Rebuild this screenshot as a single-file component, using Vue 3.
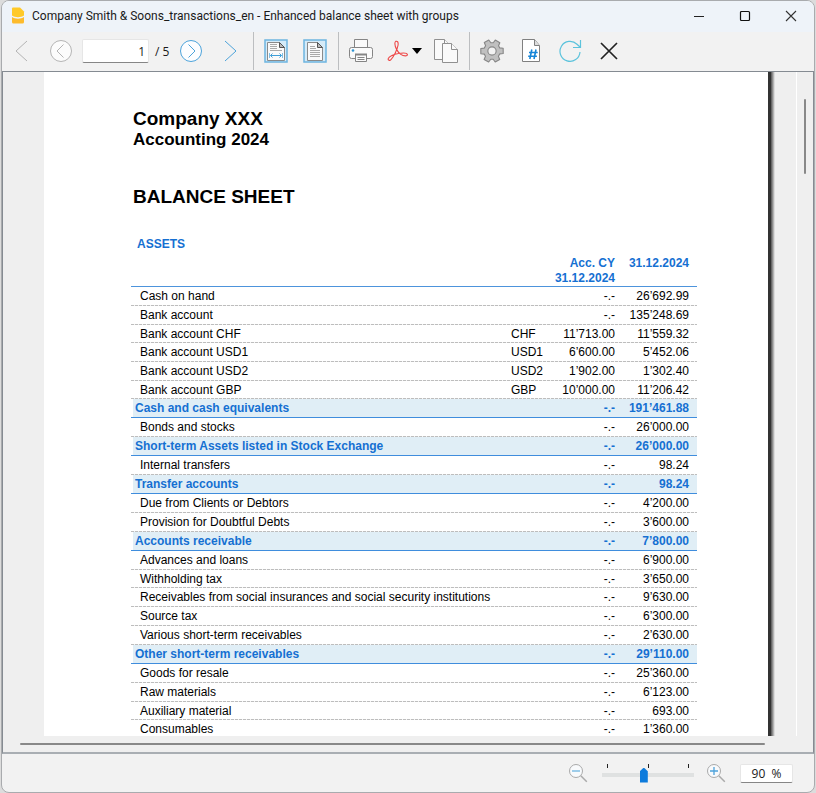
<script setup>
import { ref } from 'vue'

const page = ref('1')
const zoom = ref(90)

const rows = [
  { name: 'Cash on hand', cur: '', cy: '-.-', amount: '26’692.99' },
  { name: 'Bank account', cur: '', cy: '-.-', amount: '135’248.69' },
  { name: 'Bank account CHF', cur: 'CHF', cy: '11’713.00', amount: '11’559.32' },
  { name: 'Bank account USD1', cur: 'USD1', cy: '6’600.00', amount: '5’452.06' },
  { name: 'Bank account USD2', cur: 'USD2', cy: '1’902.00', amount: '1’302.40' },
  { name: 'Bank account GBP', cur: 'GBP', cy: '10’000.00', amount: '11’206.42' },
  { name: 'Cash and cash equivalents', cur: '', cy: '-.-', amount: '191’461.88', group: true },
  { name: 'Bonds and stocks', cur: '', cy: '-.-', amount: '26’000.00' },
  { name: 'Short-term Assets listed in Stock Exchange', cur: '', cy: '-.-', amount: '26’000.00', group: true },
  { name: 'Internal transfers', cur: '', cy: '-.-', amount: '98.24' },
  { name: 'Transfer accounts', cur: '', cy: '-.-', amount: '98.24', group: true },
  { name: 'Due from Clients or Debtors', cur: '', cy: '-.-', amount: '4’200.00' },
  { name: 'Provision for Doubtful Debts', cur: '', cy: '-.-', amount: '3’600.00' },
  { name: 'Accounts receivable', cur: '', cy: '-.-', amount: '7’800.00', group: true },
  { name: 'Advances and loans', cur: '', cy: '-.-', amount: '6’900.00' },
  { name: 'Withholding tax', cur: '', cy: '-.-', amount: '3’650.00' },
  { name: 'Receivables from social insurances and social security institutions', cur: '', cy: '-.-', amount: '9’630.00' },
  { name: 'Source tax', cur: '', cy: '-.-', amount: '6’300.00' },
  { name: 'Various short-term receivables', cur: '', cy: '-.-', amount: '2’630.00' },
  { name: 'Other short-term receivables', cur: '', cy: '-.-', amount: '29’110.00', group: true },
  { name: 'Goods for resale', cur: '', cy: '-.-', amount: '25’360.00' },
  { name: 'Raw materials', cur: '', cy: '-.-', amount: '6’123.00' },
  { name: 'Auxiliary material', cur: '', cy: '-.-', amount: '693.00' },
  { name: 'Consumables', cur: '', cy: '-.-', amount: '1’360.00' },
]
</script>

<template>
  <div class="window">
    <header class="titlebar">
      <svg class="logo" width="14" height="17" viewBox="0 0 14 17">
        <path d="M1 1.500q0-1 1-1h7l4 4v4c-3 2.300-9 2.300-12 0z" fill="#ffc928" />
        <path d="M1 10c3 2.300 9 2.300 12 0v5q0 1.500-1.500 1.500h-9Q1 16.500 1 15z" fill="#fdbb2c" />
      </svg>
      <h1>Company Smith &amp; Soons_transactions_en - Enhanced balance sheet with groups</h1>
      <div class="caption">
        <button type="button" aria-label="Minimize">
          <svg width="12" height="12" viewBox="0 0 12 12"><path d="M1 6.500h10" stroke="#222" /></svg>
        </button>
        <button type="button" aria-label="Maximize">
          <svg width="12" height="12" viewBox="0 0 12 12"><rect x="1.500" y="1.500" width="9" height="9" rx="1" fill="none" stroke="#111" stroke-width="1.200" /></svg>
        </button>
        <button type="button" aria-label="Close window">
          <svg width="12" height="12" viewBox="0 0 12 12"><path d="M1 1l10 10M11 1L1 11" stroke="#333" stroke-width="1.100" /></svg>
        </button>
      </div>
    </header>

    <nav class="toolbar">
      <button type="button" aria-label="First page">
        <svg width="24" height="24" viewBox="0 0 24 24" fill="none" stroke="#b4b4b4"><path d="M17 2L6 12l11 10" /></svg>
      </button>
      <button type="button" aria-label="Previous page">
        <svg width="24" height="24" viewBox="0 0 24 24" fill="none" stroke="#b4b4b4"><circle cx="12" cy="12" r="10.500" fill="#fcfcfc" /><path d="M14.500 5.500L8 12l6.500 6.500" /></svg>
      </button>
      <input v-model="page" class="field page-field" type="text" aria-label="Page number" />
      <span class="total">/ 5</span>
      <button type="button" aria-label="Next page">
        <svg width="24" height="24" viewBox="0 0 24 24" fill="none" stroke="#4da3da"><circle cx="12" cy="12" r="10.500" fill="#fcfdff" /><path d="M9.500 5.500L16 12l-6.500 6.500" /></svg>
      </button>
      <button type="button" aria-label="Last page">
        <svg width="24" height="24" viewBox="0 0 24 24" fill="none" stroke="#4da3da"><path d="M7 2l11 10L7 22" /></svg>
      </button>

      <span class="sep"></span>
      <button type="button" aria-label="Fit width">
        <svg width="24" height="24" viewBox="0 0 24 24" fill="none">
          <rect x="1" y="1" width="22" height="22" fill="#d5ebf8" stroke="#6db5e0" stroke-width="1.500" />
          <path d="M3.500 21.500v-18h12l5 5v13z" fill="#fafafa" stroke="#8a8a8a" />
          <path d="M15.500 3.500v5h5z" fill="#bbb" stroke="#555" />
          <path d="M6 5.500h7M6 7.500h7M6 9.500h7M6 11.500h12" stroke="#aaa" />
          <path d="M6.500 16.500h11M8.500 14.500l-2 2 2 2M15.500 14.500l2 2-2 2" stroke="#3f9fd8" />
          <path d="M5.500 14v5M18.500 14v5" stroke="#7fc0e6" />
        </svg>
      </button>
      <button type="button" aria-label="Fit page">
        <svg width="24" height="24" viewBox="0 0 24 24" fill="none">
          <rect x="1" y="1" width="22" height="22" fill="#d5ebf8" stroke="#6db5e0" stroke-width="1.500" />
          <path d="M4.500 21.500v-18h10l5 5v13z" fill="#fafafa" stroke="#8a8a8a" />
          <path d="M14.500 3.500v5h5z" fill="#bbb" stroke="#555" />
          <path d="M7 7.500h5M7 9.500h6M7 11.500h10M7 13.500h10M7 15.500h10M7 17.500h10" stroke="#aaa" />
        </svg>
      </button>

      <span class="sep"></span>
      <button type="button" aria-label="Print">
        <svg width="24" height="24" viewBox="0 0 24 24" fill="#fafafa" stroke="#858585">
          <path d="M5.500 9V.500h13V9" />
          <rect x=".500" y="8.500" width="23" height="11" rx="2" />
          <circle cx="4" cy="11.500" r="1.300" fill="#2d94d2" stroke="none" />
          <path d="M6.500 15.500h11v7h-11z" /><path d="M6 15.500h12" stroke-width="2" />
          <path d="M8.500 18.500h7M8.500 20.500h7" />
        </svg>
      </button>
      <button type="button" class="split" aria-label="Export to PDF">
        <svg width="22" height="22" viewBox="0 0 24 24" fill="none" stroke="#ee4848" stroke-width="1.200">
          <path d="M9.500 1.500c2-.8 3 1 2.600 4C11.500 10 7 18.500 4.300 21.500 3 23 .8 22 1.300 20.300 2 18 7.500 15.600 12.500 14.800c4.500-.7 9.500-.6 9.800 1.200.3 1.800-4 1.900-7.300-.3C11.300 13.200 8.700 7.500 8.600 4c0-1.200.2-2.100.9-2.500z" />
        </svg>
        <svg width="10" height="6" viewBox="0 0 10 6"><path d="M0 0h10L5 6z" fill="#000" /></svg>
      </button>
      <button type="button" aria-label="Copy">
        <svg width="26" height="24" viewBox="0 0 26 24" fill="#fafafa" stroke="#909090">
          <path d="M1.500 20.500V.500h10l4 4v16z" /><path d="M11.500.500v4h4" />
          <path d="M9.500 23.500V4.500h9l6 6v13z" /><path d="M18.500 4.500v6h6" />
        </svg>
      </button>

      <span class="sep"></span>
      <button type="button" aria-label="Settings">
        <svg width="24" height="24" viewBox="1 0.700 22 22" fill="#c0c0c0" stroke="#868686" stroke-linejoin="round">
          <path transform="rotate(30 12 11.700)" d="M9.200 4.600L9.600 1.500h4.800l.4 3.100 1.900 1.100 2.900-1.300 2.400 4.100-2.500 1.900v2.600l2.500 1.900-2.400 4.100-2.900-1.300-1.900 1.100-.4 3.200H9.600l-.4-3.200-1.900-1.100-2.900 1.300L2 14.900 4.500 13v-2.600L2 8.500l2.400-4.100 2.900 1.300z" />
          <circle cx="12" cy="11.700" r="3.800" fill="#f2f2f2" />
        </svg>
      </button>
      <button type="button" aria-label="Page numbering">
        <svg width="24" height="24" viewBox="0 0 24 24" fill="none">
          <path d="M3.500 22.500V.500h12l5 6v16z" fill="#fff" stroke="#808080" /><path d="M15.500.500v6h5" fill="#ddd" stroke="#808080" />
          <path d="M12.800 10.500l-2 9.500M17 10.500L15 20M10 13.500h8.700M9.200 17.300h8.700" stroke="#1585d8" stroke-width="1.600" />
        </svg>
      </button>
      <button type="button" aria-label="Refresh">
        <svg width="24" height="24" viewBox="0 0 24 24" fill="none" stroke="#5cc3dc" stroke-width="1.200"><path d="M22 13A10 10 0 1 1 19 5.200l3 2.800M22.500 1v7.500h-7.500" /></svg>
      </button>
      <button type="button" aria-label="Close preview">
        <svg width="24" height="24" viewBox="0 0 24 24" fill="none" stroke="#222" stroke-width="1.700"><path d="M4 4l16 16M20 4L4 20" /></svg>
      </button>
    </nav>

    <main class="viewer">
      <div class="canvas">
        <article class="sheet">
          <h2 class="company">Company XXX</h2>
          <p class="period">Accounting 2024</p>
          <h2 class="doc-title">BALANCE SHEET</h2>
          <table>
            <caption>ASSETS</caption>
            <colgroup><col /><col class="c-cur" /><col class="c-cy" /><col class="c-amount" /></colgroup>
            <thead>
              <tr>
                <th></th>
                <th></th>
                <th scope="col">Acc. CY<br />31.12.2024</th>
                <th scope="col">31.12.2024</th>
              </tr>
            </thead>
            <tbody>
              <tr v-for="row in rows" :key="row.name" :class="{ group: row.group }">
                <td>{{ row.name }}</td>
                <td>{{ row.cur }}</td>
                <td class="num">{{ row.cy }}</td>
                <td class="num">{{ row.amount }}</td>
              </tr>
            </tbody>
          </table>
        </article>
        <div class="vscroll"><div class="vthumb"></div></div>
      </div>
      <div class="hscroll"><div class="hthumb"></div></div>
    </main>

    <footer class="statusbar">
      <button type="button" aria-label="Zoom out">
        <svg width="20" height="20" viewBox="0 0 20 20" fill="none" stroke="#aaa"><circle cx="8" cy="8" r="6.500" fill="#f8fafc" /><path d="M12.800 12.800l6 6" stroke-width="1.500" /><path d="M4 8h8" stroke="#6db5e0" stroke-width="1.300" /></svg>
      </button>
      <div class="zoomer">
        <div class="ticks"><i></i><i></i><i></i></div>
        <input v-model="zoom" type="range" min="0" max="200" aria-label="Zoom" />
      </div>
      <button type="button" aria-label="Zoom in">
        <svg width="20" height="20" viewBox="0 0 20 20" fill="none" stroke="#aaa"><circle cx="8" cy="8" r="6.500" fill="#f8fafc" /><path d="M12.800 12.800l6 6" stroke-width="1.500" /><path d="M4 8h8M8 4v8" stroke="#4da3da" stroke-width="1.300" /></svg>
      </button>
      <input class="field zoom-field" type="text" value="90  %" aria-label="Zoom percentage" />
    </footer>
  </div>
</template>

<style>
body {
  background: #dcdcdc;
}
</style>

<style scoped>
.window {
  box-sizing: border-box;
  display: flex;
  flex-direction: column;
  height: 100vh;
  margin: 0 1px;
  overflow: hidden;
  border: 1px solid #a9abae;
  border-radius: 8px;
  background: #f2f2f2;
  font-family: "Open Sans", "Noto Sans", sans-serif;
  font-size: 12px;
  color: #1a1a1a;
}

button {
  display: flex;
  align-items: center;
  justify-content: center;
  flex: none;
  padding: 0;
  border: 0;
  background: none;
}

svg {
  flex: none;
}

.titlebar {
  display: flex;
  align-items: center;
  flex: none;
  height: 31px;
  padding-left: 9px;
  background: #eef3f9;
}

h1 {
  flex: 1;
  margin: 0 0 0 7px;
  overflow: hidden;
  font-family: Roboto, "Open Sans", sans-serif;
  font-size: 12px;
  font-weight: 400;
  line-height: 30px;
  white-space: nowrap;
}

.caption {
  display: flex;
}

.caption button {
  width: 46px;
  height: 30px;
}

.titlebar,
.caption {
  align-items: flex-start;
}

.logo {
  margin-top: 6px;
}

.toolbar {
  display: flex;
  align-items: center;
  flex: none;
  height: 38px;
  padding-bottom: 1px;
}

.toolbar button {
  width: 39px;
  height: 38px;
}

.toolbar .split {
  gap: 3px;
  width: 46px;
  padding-left: 3px;
}

.sep {
  width: 1px;
  align-self: stretch;
  margin: 0 2px 0 4px;
  background: #bcbec0;
}

.field {
  box-sizing: border-box;
  border: 1px solid #e6e6e6;
  border-bottom-color: #868686;
  border-radius: 2px;
  background: #fff;
  font: inherit;
  color: inherit;
}

.page-field {
  width: 67px;
  height: 24px;
  margin-left: 2px;
  padding: 0 3px;
  text-align: right;
}

.total {
  width: 16px;
  margin-left: 6px;
  white-space: nowrap;
}

.viewer {
  display: flex;
  flex: 1;
  flex-direction: column;
  min-height: 0;
  border: 1px solid #858b92;
  border-bottom: 2px solid #a9aeb3;
  background: #efefef;
}

.canvas {
  display: flex;
  flex: 1;
  min-height: 0;
  padding-left: 41px;
  overflow: hidden;
}

.sheet {
  flex: 1;
  padding: 36px 71px 0 87px;
  background: #fff;
  box-shadow: 3px 0 0 #333, 4px 0 0 #666, 5px 0 0 #8c8c8c, 6px 0 0 #b4b4b4, 7px 0 0 #dcdcdc;
  font-family: "Liberation Sans", Arial, sans-serif;
  color: #000;
}

.company,
.doc-title {
  margin: 0 2px;
  font-size: 19px;
  line-height: 22px;
}

.period {
  margin: 0 2px 36px;
  font-size: 17px;
  font-weight: 700;
  line-height: 20px;
}

table {
  width: 100%;
  margin-top: 29px;
  border-spacing: 0;
  table-layout: fixed;
  font-size: 12px;
  line-height: 15px;
}

caption {
  padding: 0 6px 4px;
  font-weight: 700;
  color: #1570d2;
  text-align: left;
}

.c-cur {
  width: 36px;
}

.c-cy {
  width: 76px;
}

.c-amount {
  width: 74px;
}

th {
  padding: 0;
  border-bottom: 1px solid #4d94dc;
  color: #1570d2;
  text-align: right;
  vertical-align: top;
}

th:nth-child(n + 3),
.num {
  padding-right: 8px;
  text-align: right;
}

td {
  padding: 0;
  white-space: nowrap;
}

td:first-child {
  padding-left: 9px;
}

tbody tr {
  height: 19px;
  background: repeating-linear-gradient(90deg, #bdbdbd 0 3px, #f4f4f4 3px 4px) bottom / 100% 1px no-repeat;
}

tbody tr:nth-child(20n + 3),
tbody tr:nth-child(10n + 6) {
  height: 18px;
}

tbody .group {
  background:
    linear-gradient(#3f8ddd, #3f8ddd) bottom / 100% 1px no-repeat,
    linear-gradient(#e0eef6, #e0eef6) right / calc(100% - 2px) 100% no-repeat;
  font-weight: 700;
  color: #1570d2;
}

.group td:first-child {
  padding-left: 4px;
}

.vscroll {
  display: flex;
  justify-content: center;
  flex: none;
  width: 16px;
  margin-left: 28px;
  border-left: 1px solid #fff;
}

.vthumb {
  width: 2px;
  height: 75px;
  margin-top: 27px;
  border-radius: 1px;
  background: #888;
}

.hscroll {
  display: flex;
  align-items: center;
  flex: none;
  height: 16px;
  padding: 0 48px 0 17px;
}

.hthumb {
  flex: 1;
  height: 2px;
  border-radius: 1px;
  background: #888;
}

.statusbar {
  display: flex;
  align-items: center;
  justify-content: flex-end;
  flex: none;
  height: 38px;
  padding-right: 21px;
}

.zoomer {
  width: 92px;
  margin: 0 12px 0 14px;
}

.ticks {
  display: flex;
  justify-content: space-between;
  padding: 0 5px;
}

.ticks i {
  width: 1px;
  height: 4px;
  background: #222;
}

input[type="range"] {
  display: block;
  width: 100%;
  height: 15px;
  margin: 0;
  appearance: none;
  background: linear-gradient(#dfe1e1, #dfe1e1) center / 100% 4px no-repeat;
}

input[type="range"]::-webkit-slider-thumb {
  width: 8px;
  height: 15px;
  appearance: none;
  background: #0d7bdc;
  clip-path: polygon(50% 0, 100% 25%, 100% 100%, 0 100%, 0 25%);
}

.zoom-field {
  width: 53px;
  height: 19px;
  margin-left: 14px;
  padding: 0;
  text-align: center;
  white-space: pre;
}
</style>
